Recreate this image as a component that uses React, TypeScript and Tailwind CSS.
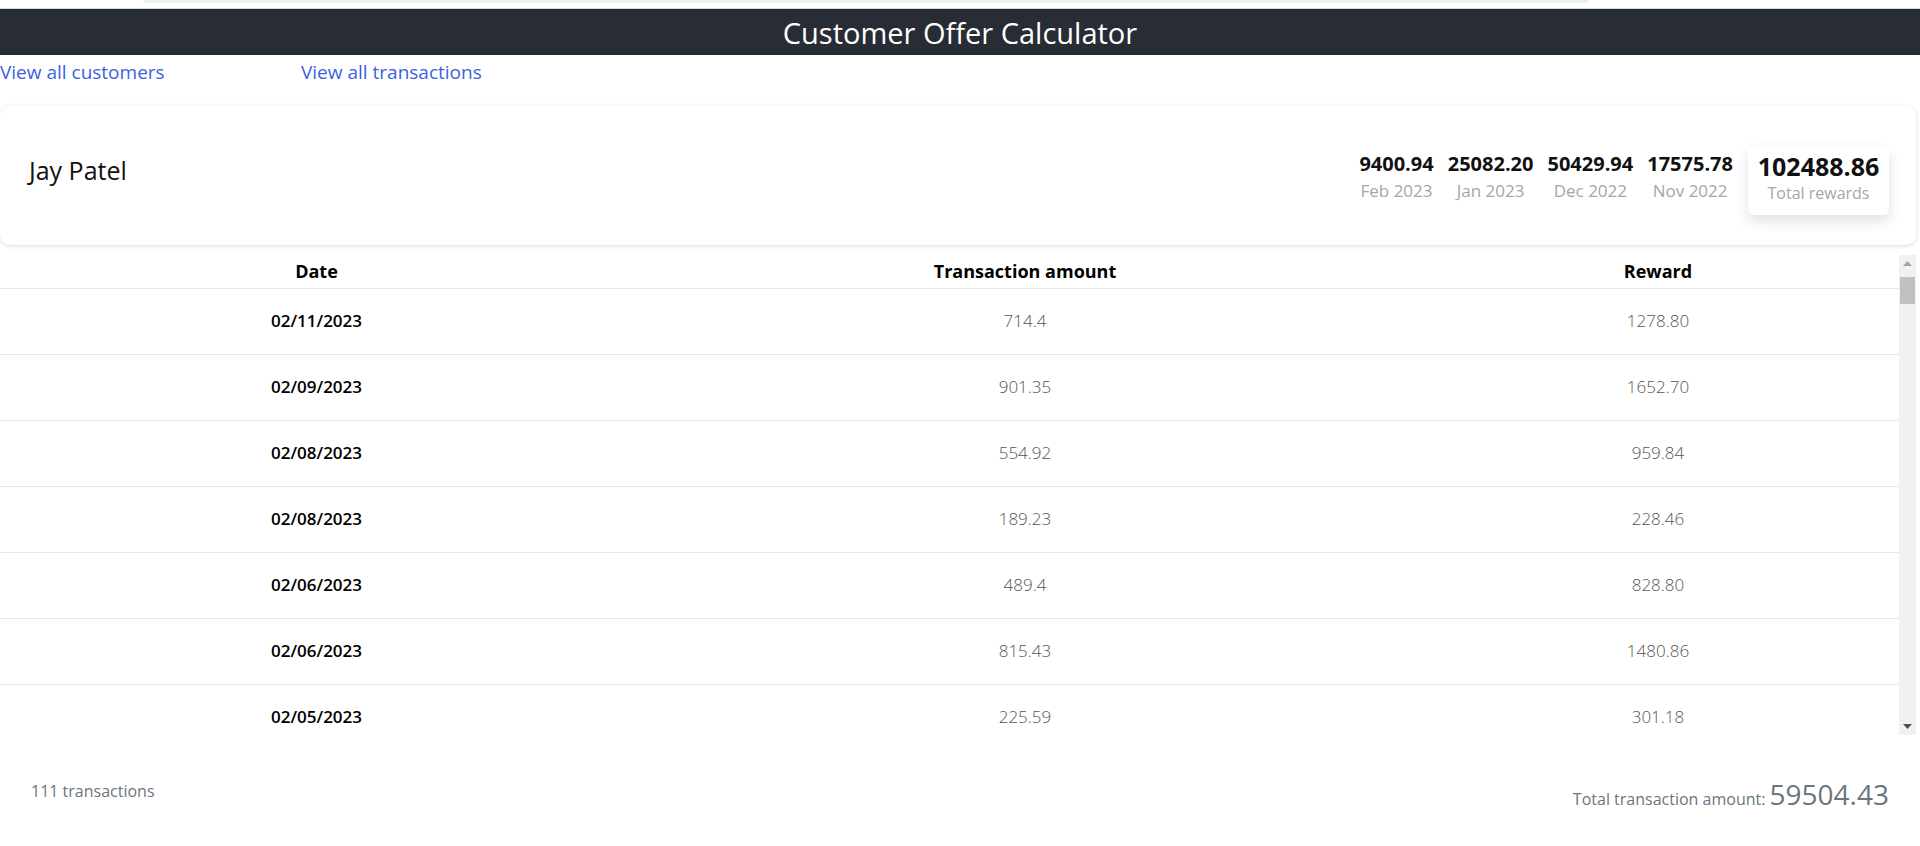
import React from 'react';

type Txn = { date: string; amount: number };

const calcReward = (amount: number) => {
  let r = 0;
  if (amount > 100) r += 2 * (amount - 100);
  if (amount > 50) r += Math.min(amount, 100) - 50;
  return r;
};

// only the rows that fit in the scroller window are rendered
const txns: Txn[] = [
  { date: '02/11/2023', amount: 714.4 },
  { date: '02/09/2023', amount: 901.35 },
  { date: '02/08/2023', amount: 554.92 },
  { date: '02/08/2023', amount: 189.23 },
  { date: '02/06/2023', amount: 489.4 },
  { date: '02/06/2023', amount: 815.43 },
  { date: '02/05/2023', amount: 225.59 },
];

const months = [
  { value: '9400.94', label: 'Feb 2023' },
  { value: '25082.20', label: 'Jan 2023' },
  { value: '50429.94', label: 'Dec 2022' },
  { value: '17575.78', label: 'Nov 2022' },
];

const ScrollBar: React.FC = () => (
  <div className="w-[17px] flex flex-col bg-[#f1f1f1]">
    <div className="h-[17px] flex items-center justify-center">
      <svg width="9" height="5" viewBox="0 0 9 5"><path d="M4.5 0L9 5H0z" fill="#a3a3a3" /></svg>
    </div>
    <div className="mt-[5px] h-[27px] mx-[1px] bg-[#c1c1c1]"></div>
    <div className="flex-1"></div>
    <div className="h-[17px] flex items-center justify-center">
      <svg width="9" height="5" viewBox="0 0 9 5"><path d="M0 0H9L4.5 5z" fill="#505050" /></svg>
    </div>
  </div>
);

const App: React.FC = () => {
  return (
    <div className="h-[846px] overflow-hidden bg-white font-['Open_Sans',sans-serif] text-[#212529]">
      <div className="h-[3px] ml-[143px] mr-[332px] bg-[#edeff0] rounded-b-[6px]"></div>
      <div className="h-[5px]"></div>
      <div className="h-px bg-[#d9dadb]"></div>

      <header className="h-[46px] bg-[#282c34] flex items-center justify-center">
        <h1 className="text-white text-[29px] leading-none">Customer Offer Calculator</h1>
      </header>

      <nav className="flex h-[34px] items-center text-[19px] text-[#3d5fe0]">
        <a href="#" className="w-[301px]">View all customers</a>
        <a href="#">View all transactions</a>
      </nav>

      <div className="mt-[17px] mr-1 h-[139px] rounded-[10px] shadow-[0_1px_4px_rgba(0,0,0,0.15)] flex items-center justify-between pl-[29px] pr-[27px]">
        <div className="text-[25px] text-[#111] mb-[10px]">Jay Patel</div>
        <div className="flex items-center gap-[15px]">
          <div className="flex gap-[14px] mt-[4px]">
            {months.map(m => (
              <div key={m.label} className="flex flex-col items-center">
                <span className="text-[20px] font-bold text-[#111] leading-[26px]">{m.value}</span>
                <span className="text-[17px] text-[#a3a6ad] leading-[28px]">{m.label}</span>
              </div>
            ))}
          </div>
          <div className="w-[141px] h-[69px] mt-[10px] rounded-[6px] shadow-[0_6px_14px_rgba(0,0,0,0.12)] flex flex-col items-center justify-center">
            <span className="text-[25px] font-bold text-[#111] leading-[28px] -mt-[3px]">102488.86</span>
            <span className="text-[16px] text-[#a3a6ad] leading-[26px]">Total rewards</span>
          </div>
        </div>
      </div>

      <div className="mt-[10px] mr-1 h-[480px] flex">
        <div className="flex-1 overflow-hidden">
          <table className="w-full border-collapse text-center">
            <thead className="bg-white">
              <tr className="h-[33px] border-b border-[#e5e5ea]">
                <th className="w-[633px] text-[18px] font-bold text-black">Date</th>
                <th className="w-[784px] text-[18px] font-bold text-black">Transaction amount</th>
                <th className="text-[18px] font-bold text-black">Reward</th>
              </tr>
            </thead>
            <tbody>
              {txns.map((t, i) => (
                <tr key={i} className="h-[66px] border-b border-[#e5e5ea]">
                  <td className="text-[17px] font-semibold text-black">{t.date}</td>
                  <td className="text-[17px] font-light text-[#555]">{String(t.amount)}</td>
                  <td className="text-[17px] font-light text-[#555]">{calcReward(t.amount).toFixed(2)}</td>
                </tr>
              ))}
            </tbody>
          </table>
        </div>
        <ScrollBar />
      </div>

      <footer className="h-[111px] flex items-center justify-between pl-[31px] pr-[31px]">
        <span className="text-[16px] text-[#6c757d]">111 transactions</span>
        <span className="text-[#6c757d] text-[16px] mt-[6px]">
          Total transaction amount: <span className="text-[28px]">59504.43</span>
        </span>
      </footer>
    </div>
  );
};

export default App;
